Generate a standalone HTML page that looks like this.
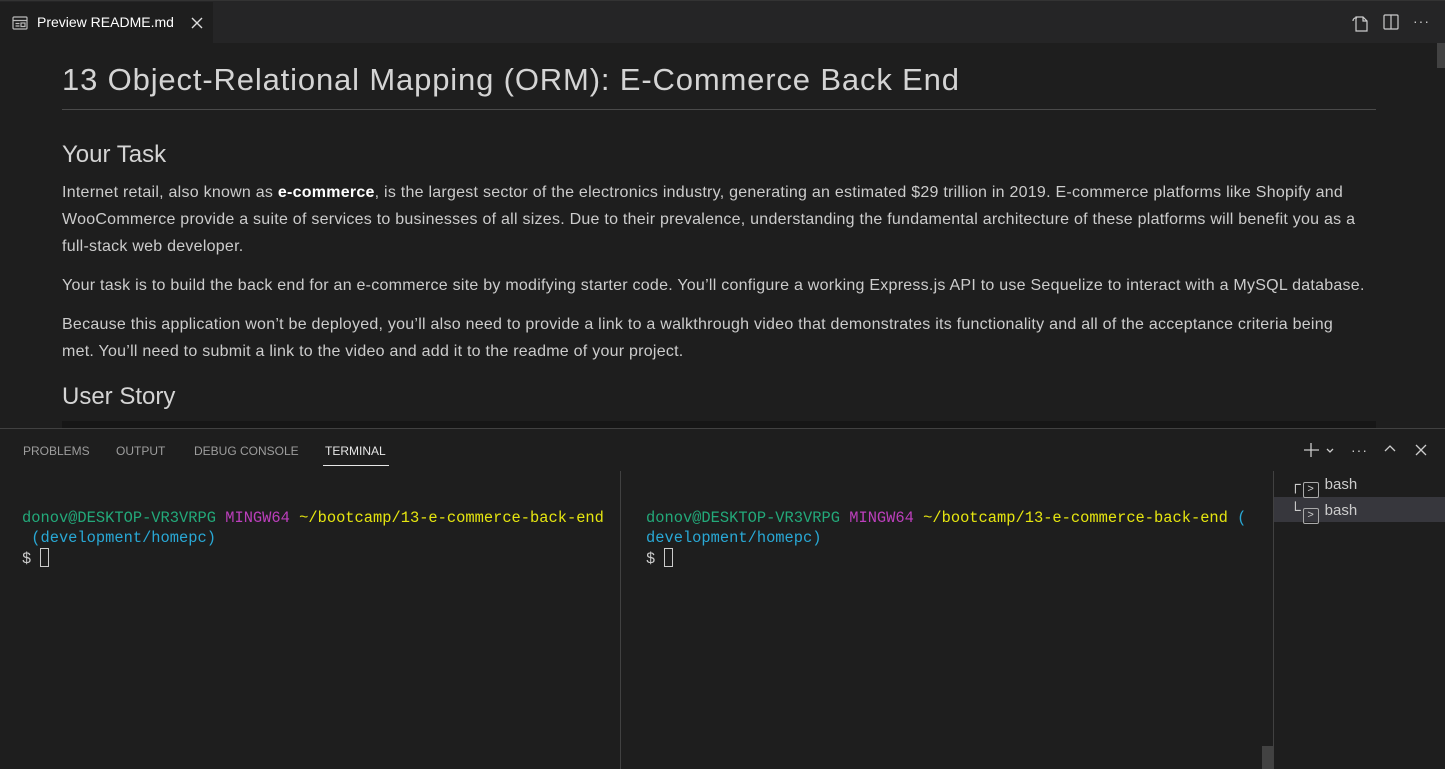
<!DOCTYPE html>
<html><head><meta charset="utf-8"><style>
*{margin:0;padding:0;box-sizing:border-box}
body{width:1445px;height:768px;background:#1e1e1e;overflow:hidden;font-family:"Liberation Sans",sans-serif;color:#cccccc;position:relative}
.tabbar{position:absolute;left:0;top:0;width:1445px;height:43px;background:#252526;border-top:1px solid #333}
.tab{position:absolute;left:0;top:1px;width:213px;height:42px;background:#1e1e1e;color:#fff;font-size:14px}
.tab span{position:absolute;left:37px;top:12px}
.content{position:absolute;left:62px;top:0;width:1314px}
h1{position:absolute;top:62px;left:0;font-size:31px;letter-spacing:0.85px;font-weight:400;color:#d4d4d4;white-space:nowrap}
.hr{position:absolute;top:109px;left:0;width:1314px;height:1px;background:#4a4a4a}
h2{position:absolute;left:0;font-size:24px;font-weight:400;color:#d4d4d4;white-space:nowrap}
p{position:absolute;left:0;width:1300px;font-size:16px;letter-spacing:0.25px;line-height:27px;color:#cccccc}
.sb{position:absolute;left:1437px;top:43px;width:8px;height:25px;background:#424242}
.panel{position:absolute;left:0;top:428px;width:1445px;height:340px;background:#1e1e1e;border-top:1px solid #414141}
.ptab{position:absolute;top:15px;font-size:12px;color:#9d9d9d}
.term{position:absolute;font-family:"Liberation Mono",monospace;font-size:15.4px;line-height:20px;white-space:pre;color:#cccccc}
.g{color:#23a97a}.m{color:#bc3fbc}.y{color:#e5e510}.c{color:#29a8d5}
.cur{display:inline-block;width:9px;height:19px;border:1px solid #ccc;vertical-align:-4px}
</style></head><body>
<div class="tabbar">
<div class="tab">
<svg style="position:absolute;left:12px;top:14px" width="16" height="14" viewBox="0 0 16 14" fill="none" stroke="#bbb" stroke-width="1.2"><rect x="1" y="1" width="14" height="12" rx="1"/><path d="M1 4.5h14M3.5 7.5h4M3.5 10h4"/><rect x="9" y="7" width="4" height="3.5"/></svg>
<span>Preview README.md</span>
<svg style="position:absolute;left:191px;top:15px" width="12" height="12" viewBox="0 0 12 12" stroke="#ddd" stroke-width="1.4"><path d="M1 1L11 11M11 1L1 11"/></svg>
</div>
<svg style="position:absolute;left:1350px;top:12px" width="20" height="19" viewBox="0 0 20 19" fill="none" stroke="#ccc" stroke-width="1.2"><path d="M6 4h7l4 4v10H6z M13 4v4h4"/><path d="M3 8a3 3 0 0 1 4-3"/></svg>
<svg style="position:absolute;left:1383px;top:13px" width="16" height="16" viewBox="0 0 16 16" fill="none" stroke="#ccc" stroke-width="1.2"><rect x="1" y="1" width="14" height="14" rx="1"/><path d="M8 1v14"/></svg>
<div style="position:absolute;left:1413px;top:12px;color:#ccc;font-size:14px;letter-spacing:1px">···</div>
</div>
<div class="sb"></div>
<div class="content">
<h1>13 Object-Relational Mapping (ORM): E-Commerce Back End</h1>
<div class="hr"></div>
<h2 style="top:141px">Your Task</h2>
<p style="top:179px">Internet retail, also known as <b style="color:#fff">e-commerce</b>, is the largest sector of the electronics industry, generating an estimated $29 trillion in 2019. E-commerce platforms like Shopify and WooCommerce provide a suite of services to businesses of all sizes. Due to their prevalence, understanding the fundamental architecture of these platforms will benefit you as a full-stack web developer.</p>
<p style="top:272px;width:1320px">Your task is to build the back end for an e-commerce site by modifying starter code. You’ll configure a working Express.js API to use Sequelize to interact with a MySQL database.</p>
<p style="top:311px">Because this application won’t be deployed, you’ll also need to provide a link to a walkthrough video that demonstrates its functionality and all of the acceptance criteria being met. You’ll need to submit a link to the video and add it to the readme of your project.</p>
<h2 style="top:383px">User Story</h2>
<div style="position:absolute;top:421px;left:0;width:1314px;height:8px;background:#161616"></div>
</div>
<div class="panel">
<div class="ptab" style="left:23px">PROBLEMS</div>
<div class="ptab" style="left:116px">OUTPUT</div>
<div class="ptab" style="left:194px">DEBUG CONSOLE</div>
<div class="ptab" style="left:325px;color:#e7e7e7">TERMINAL</div>
<div style="position:absolute;left:323px;top:36px;width:66px;height:1px;background:#e7e7e7"></div>
<svg style="position:absolute;left:1303px;top:13px" width="40" height="16" viewBox="0 0 40 16" fill="none" stroke="#ccc" stroke-width="1.3"><path d="M8 1v14M1 8h15"/><path d="M24 7l3 3 3-3"/></svg>
<div style="position:absolute;left:1351px;top:13px;color:#ccc;font-size:14px;letter-spacing:1px">···</div>
<svg style="position:absolute;left:1383px;top:15px" width="14" height="10" viewBox="0 0 14 10" fill="none" stroke="#ccc" stroke-width="1.3"><path d="M2 7l5-5 5 5"/></svg>
<svg style="position:absolute;left:1415px;top:15px" width="12" height="12" viewBox="0 0 12 12" stroke="#ccc" stroke-width="1.3"><path d="M1 1L11 11M11 1L1 11"/></svg>
<div style="position:absolute;left:620px;top:42px;width:1px;height:298px;background:#414141"></div>
<div style="position:absolute;left:1273px;top:42px;width:1px;height:298px;background:#414141"></div>
<div class="term" style="left:22px;top:79px"><span class="g">donov@DESKTOP-VR3VRPG</span> <span class="m">MINGW64</span> <span class="y">~/bootcamp/13-e-commerce-back-end</span>
<span class="c"> (development/homepc)</span>
$ <span class="cur"></span></div>
<div class="term" style="left:646px;top:79px"><span class="g">donov@DESKTOP-VR3VRPG</span> <span class="m">MINGW64</span> <span class="y">~/bootcamp/13-e-commerce-back-end</span> <span class="c">(</span>
<span class="c">development/homepc)</span>
$ <span class="cur"></span></div>
<div style="position:absolute;left:1274px;top:68px;width:171px;height:25px;background:#37373d"></div>
<div style="position:absolute;left:1290px;top:43px;color:#ccc;font-size:15px;line-height:26px">
<div>┌<span style="display:inline-block;width:16px;height:16px;border:1px solid #aaa;border-radius:2px;vertical-align:-3px;margin:0 6px 0 2px;font-size:11px;line-height:13px;text-align:center">&gt;</span>bash</div>
<div>└<span style="display:inline-block;width:16px;height:16px;border:1px solid #aaa;border-radius:2px;vertical-align:-3px;margin:0 6px 0 2px;font-size:11px;line-height:13px;text-align:center">&gt;</span>bash</div>
</div>
<div style="position:absolute;left:1262px;top:317px;width:11px;height:23px;background:#424242"></div>
</div>
</body></html>
